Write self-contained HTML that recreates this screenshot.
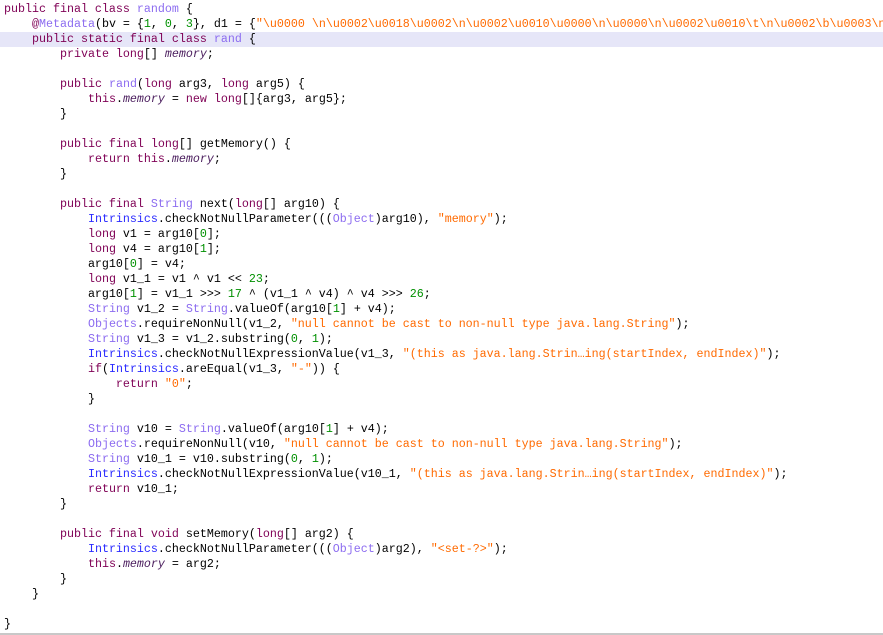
<!DOCTYPE html>
<html><head><meta charset="utf-8"><style>
html,body{margin:0;padding:0;background:#fff;width:883px;height:635px;overflow:hidden;position:relative}
.l{position:absolute;left:0;width:883px;height:15px;line-height:15px;font-family:"Liberation Mono",monospace;font-size:11.67px;color:#000;white-space:pre;padding-left:4px;box-sizing:border-box}
.hl{background:#e6e6f8}
.k{color:#7f0055}
.t{color:#8c6cf0}
.c{color:#2a2aff}
.s{color:#ff6a00}
.n{color:#009000}
.f{color:#4b1e5e;font-style:italic}
.bar{position:absolute;left:0;top:633px;width:883px;height:2px;background:#c8c8c8}
</style></head><body>
<div class="l" style="top:-13px">    <span class="k">@</span>Metadata(bv = {1, 0, 3}, d1 = {</div>
<div class="l" style="top:2px"><span class="k">public final class</span> <span class="t">random</span> {</div>
<div class="l" style="top:17px">    <span class="k">@</span><span class="t">Metadata</span>(bv = {<span class="n">1</span>, <span class="n">0</span>, <span class="n">3</span>}, d1 = {<span class="s">"\u0000 \n\u0002\u0018\u0002\n\u0002\u0010\u0000\n\u0000\n\u0002\u0010\t\n\u0002\b\u0003\n\u0002</span></div>
<div class="l hl" style="top:32px">    <span class="k">public static final class</span> <span class="t">rand</span> {</div>
<div class="l" style="top:47px">        <span class="k">private long</span>[] <span class="f">memory</span>;</div>
<div class="l" style="top:77px">        <span class="k">public</span> <span class="t">rand</span>(<span class="k">long</span> arg3, <span class="k">long</span> arg5) {</div>
<div class="l" style="top:92px">            <span class="k">this</span>.<span class="f">memory</span> = <span class="k">new long</span>[]{arg3, arg5};</div>
<div class="l" style="top:107px">        }</div>
<div class="l" style="top:137px">        <span class="k">public final long</span>[] getMemory() {</div>
<div class="l" style="top:152px">            <span class="k">return this</span>.<span class="f">memory</span>;</div>
<div class="l" style="top:167px">        }</div>
<div class="l" style="top:197px">        <span class="k">public final</span> <span class="t">String</span> next(<span class="k">long</span>[] arg10) {</div>
<div class="l" style="top:212px">            <span class="c">Intrinsics</span>.checkNotNullParameter(((<span class="t">Object</span>)arg10), <span class="s">"memory"</span>);</div>
<div class="l" style="top:227px">            <span class="k">long</span> v1 = arg10[<span class="n">0</span>];</div>
<div class="l" style="top:242px">            <span class="k">long</span> v4 = arg10[<span class="n">1</span>];</div>
<div class="l" style="top:257px">            arg10[<span class="n">0</span>] = v4;</div>
<div class="l" style="top:272px">            <span class="k">long</span> v1_1 = v1 ^ v1 &lt;&lt; <span class="n">23</span>;</div>
<div class="l" style="top:287px">            arg10[<span class="n">1</span>] = v1_1 &gt;&gt;&gt; <span class="n">17</span> ^ (v1_1 ^ v4) ^ v4 &gt;&gt;&gt; <span class="n">26</span>;</div>
<div class="l" style="top:302px">            <span class="t">String</span> v1_2 = <span class="t">String</span>.valueOf(arg10[<span class="n">1</span>] + v4);</div>
<div class="l" style="top:317px">            <span class="t">Objects</span>.requireNonNull(v1_2, <span class="s">"null cannot be cast to non-null type java.lang.String"</span>);</div>
<div class="l" style="top:332px">            <span class="t">String</span> v1_3 = v1_2.substring(<span class="n">0</span>, <span class="n">1</span>);</div>
<div class="l" style="top:347px">            <span class="c">Intrinsics</span>.checkNotNullExpressionValue(v1_3, <span class="s">"(this as java.lang.Strin…ing(startIndex, endIndex)"</span>);</div>
<div class="l" style="top:362px">            <span class="k">if</span>(<span class="c">Intrinsics</span>.areEqual(v1_3, <span class="s">"-"</span>)) {</div>
<div class="l" style="top:377px">                <span class="k">return</span> <span class="s">"0"</span>;</div>
<div class="l" style="top:392px">            }</div>
<div class="l" style="top:422px">            <span class="t">String</span> v10 = <span class="t">String</span>.valueOf(arg10[<span class="n">1</span>] + v4);</div>
<div class="l" style="top:437px">            <span class="t">Objects</span>.requireNonNull(v10, <span class="s">"null cannot be cast to non-null type java.lang.String"</span>);</div>
<div class="l" style="top:452px">            <span class="t">String</span> v10_1 = v10.substring(<span class="n">0</span>, <span class="n">1</span>);</div>
<div class="l" style="top:467px">            <span class="c">Intrinsics</span>.checkNotNullExpressionValue(v10_1, <span class="s">"(this as java.lang.Strin…ing(startIndex, endIndex)"</span>);</div>
<div class="l" style="top:482px">            <span class="k">return</span> v10_1;</div>
<div class="l" style="top:497px">        }</div>
<div class="l" style="top:527px">        <span class="k">public final void</span> setMemory(<span class="k">long</span>[] arg2) {</div>
<div class="l" style="top:542px">            <span class="c">Intrinsics</span>.checkNotNullParameter(((<span class="t">Object</span>)arg2), <span class="s">"&lt;set-?&gt;"</span>);</div>
<div class="l" style="top:557px">            <span class="k">this</span>.<span class="f">memory</span> = arg2;</div>
<div class="l" style="top:572px">        }</div>
<div class="l" style="top:587px">    }</div>
<div class="l" style="top:617px">}</div>
<div class="bar"></div>
</body></html>
